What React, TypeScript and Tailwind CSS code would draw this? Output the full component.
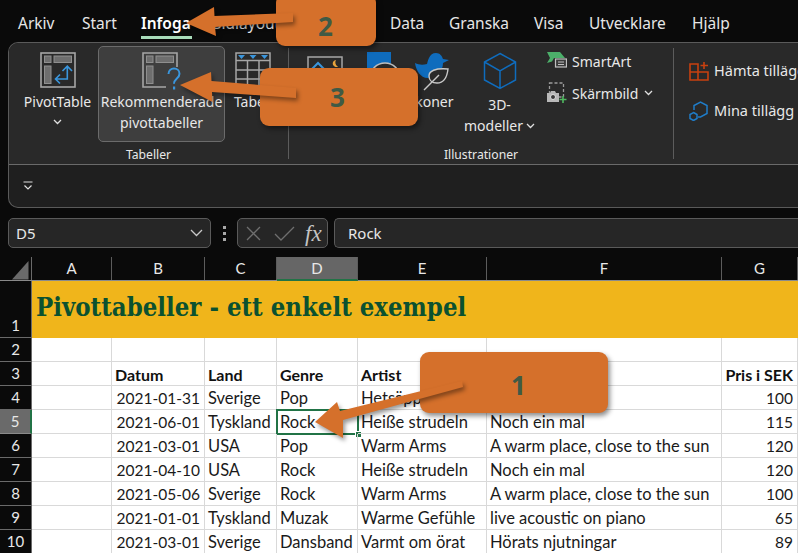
import type { ReactNode } from "react"

const ui = "font-['Noto_Sans',sans-serif]"
const sheet = "font-['Lato',sans-serif]"

const tabs = [
  { label: "Arkiv", width: "w-[64px]" },
  { label: "Start", width: "w-[59px]" },
  { label: "Infoga", width: "w-[72px]", active: true },
  { label: "Sidlayout", width: "w-[87px]" },
  { label: "Formler", width: "w-[90px]" },
  { label: "Data", width: "w-[59px]" },
  { label: "Granska", width: "w-[85px]" },
  { label: "Visa", width: "w-[55px]" },
  { label: "Utvecklare", width: "w-[103px]" },
  { label: "Hjälp", width: "w-[60px]" },
]

const columns = [
  { label: "A", width: "w-[80px]" },
  { label: "B", width: "w-[93px]" },
  { label: "C", width: "w-[72px]" },
  { label: "D", width: "w-[81px]", active: true },
  { label: "E", width: "w-[129px]" },
  { label: "F", width: "w-[235px]" },
  { label: "G", width: "w-[76px]" },
]

const rows = [
  { n: 3, bold: true, cells: ["", "Datum", "Land", "Genre", "Artist", "", "Pris i SEK"] },
  { n: 4, cells: ["", "2021-01-31", "Sverige", "Pop", "Hetsäpp", "", "100"] },
  { n: 5, cells: ["", "2021-06-01", "Tyskland", "Rock", "Heiße strudeln", "Noch ein mal", "115"] },
  { n: 6, cells: ["", "2021-03-01", "USA", "Pop", "Warm Arms", "A warm place, close to the sun", "120"] },
  { n: 7, cells: ["", "2021-04-10", "USA", "Rock", "Heiße strudeln", "Noch ein mal", "120"] },
  { n: 8, cells: ["", "2021-05-06", "Sverige", "Rock", "Warm Arms", "A warm place, close to the sun", "100"] },
  { n: 9, cells: ["", "2021-01-01", "Tyskland", "Muzak", "Warme Gefühle", "live acoustic on piano", "65"] },
  { n: 10, cells: ["", "2021-03-01", "Sverige", "Dansband", "Varmt om örat", "Hörats njutningar", "89"] },
]

function Chevron({ className = "" }: { className?: string }) {
  return (
    <svg width="9" height="6" viewBox="0 0 9 6" className={className}>
      <path d="M1 1l3.500 3.500L8 1" fill="none" stroke="#e0e0e0" strokeWidth="1.3" />
    </svg>
  )
}

function PivotBlocks() {
  return (
    <g fill="#6e6e6e" stroke="#8f8f8f" strokeWidth="1">
      <rect x="4.500" y="4" width="6.500" height="6.500" />
      <rect x="14" y="4" width="17.500" height="6.500" />
      <rect x="4.500" y="14" width="6.500" height="17.500" />
    </g>
  )
}

function PivotIcon() {
  return (
    <svg width="36" height="36" viewBox="0 0 36 36">
      <rect x="1" y="1" width="34" height="34" fill="none" stroke="#a6a6a6" strokeWidth="1.600" />
      <PivotBlocks />
      <path
        d="M27.300 15v12H16M22.500 19l4.800-4.800L32 19M20 22.500L15.500 27l4.500 4.500"
        fill="none"
        stroke="#3a96dd"
        strokeWidth="1.600"
      />
    </svg>
  )
}

function RecommendIcon() {
  return (
    <svg width="40" height="39" viewBox="0 0 40 39" className="overflow-visible">
      <path d="M24 35H1V1h34v14" fill="none" stroke="#a6a6a6" strokeWidth="1.600" />
      <PivotBlocks />
      <path
        d="M26.500 22c0-3.500 2.500-5.500 5.500-5.500s5.500 2 5.500 5.200c0 4.800-5.500 4.800-5.500 10"
        fill="none"
        stroke="#3a96dd"
        strokeWidth="2"
      />
      <rect x="31" y="34.500" width="2.200" height="3" fill="#3a96dd" />
    </svg>
  )
}

function TableIcon() {
  return (
    <svg width="36" height="36" viewBox="0 0 36 36">
      <path
        d="M1 1h34v34H1zM1 8.500h34M1 18h34M1 27h34M12.500 8.500V35M24 8.500V35"
        fill="none"
        stroke="#a6a6a6"
        strokeWidth="1.500"
      />
      <path d="M3 3h7l-3.500 4zM14.500 3h7L18 7zM26 3h7l-3.500 4z" fill="#3a96dd" />
    </svg>
  )
}

function PictureIcon() {
  return (
    <svg width="36" height="36" viewBox="0 0 36 36">
      <rect x="1" y="5" width="34" height="30" fill="none" stroke="#a6a6a6" strokeWidth="1.500" />
      <path d="M5 17l6-6 6 6" fill="none" stroke="#3a96dd" strokeWidth="2" />
      <path d="M29 8a3.500 3.500 0 1 0 2 6.500a4.500 4.500 0 0 1-2-6.500z" fill="#e8a33d" />
    </svg>
  )
}

function ShapesIcon() {
  return (
    <svg width="36" height="36" viewBox="0 0 36 36">
      <rect x="6" y="0" width="24" height="24" fill="#0f6cbd" />
      <circle cx="24" cy="26" r="15" fill="#292929" stroke="#bdbdbd" strokeWidth="1.500" />
    </svg>
  )
}

function IconsIcon() {
  return (
    <svg width="36" height="39" viewBox="0 0 36 39">
      <path
        d="M1 11c4 2 8 2 12 1c1-3 2-11 9-11c4 0 6 3 7 6l6 1l-6 3c0 8-6 15-15 15C6 26 2 18 1 11z"
        fill="#0f6cbd"
      />
      <path
        d="M34 17c-1 9-5 14-11 14c-5 0-8-3-8-7c0-5 6-8 19-7z"
        fill="#292929"
        stroke="#c8c8c8"
        strokeWidth="1.400"
      />
      <path d="M10 38l15-15" fill="none" stroke="#c8c8c8" strokeWidth="1.400" />
    </svg>
  )
}

function CubeIcon() {
  return (
    <svg width="34" height="38" viewBox="0 0 34 38" className="mb-[4px]">
      <path
        d="M17 1.500L32.500 10v18L17 36.500 1.500 28V10zM1.500 10L17 19l15.500-9M17 19v17.500"
        fill="none"
        stroke="#0f6cbd"
        strokeWidth="1.500"
      />
    </svg>
  )
}

function SmartArtIcon() {
  return (
    <svg width="20" height="20" viewBox="0 0 20 20">
      <path d="M0 1h13l5 6H7l-2 3.500L0 12l3-5z" fill="#4caf6a" />
      <rect x="8.500" y="8" width="11" height="8" fill="#3a3a3a" stroke="#c0c0c0" strokeWidth="1.200" />
      <path d="M11 11h6M11 13.500h6" stroke="#c0c0c0" strokeWidth="1" />
    </svg>
  )
}

function ScreenshotIcon() {
  return (
    <svg width="20" height="22" viewBox="0 0 20 22">
      <rect x="2.500" y="1" width="14" height="14" fill="none" stroke="#9a9a9a" strokeWidth="1.300" strokeDasharray="3 2" />
      <path d="M0 11h3l1-2h4l1 2h3v9H0z" fill="#b8b8b8" />
      <circle cx="6" cy="15" r="2.500" fill="#3a3a3a" stroke="#e0e0e0" strokeWidth="1" />
      <path d="M16 14v7M12.500 17.500h7" stroke="#4fb860" strokeWidth="1.600" />
    </svg>
  )
}

function AddinsIcon() {
  return (
    <svg width="20" height="20" viewBox="0 0 20 20">
      <path d="M1 3h8v16H1zM1 11h18v8H9" fill="none" stroke="#c8400f" strokeWidth="1.600" />
      <path d="M15 1v7M11.500 4.500h7.500" stroke="#c8400f" strokeWidth="1.600" />
    </svg>
  )
}

function MyAddinsIcon() {
  return (
    <svg width="20" height="20" viewBox="0 0 20 20">
      <path d="M5 9V4.500L11.500 1 18 4.500v8L11.500 16H9" fill="none" stroke="#1f7cc8" strokeWidth="1.500" />
      <path d="M4.500 11.500L8 13.500v4L4.500 19.500 1 17.500v-4z" fill="none" stroke="#1f7cc8" strokeWidth="1.500" />
    </svg>
  )
}

function BigButton({
  icon,
  lines,
  width,
  selected,
}: {
  icon: ReactNode
  lines: ReactNode[]
  width: string
  selected?: boolean
}) {
  return (
    <div
      className={`flex h-[96px] shrink-0 flex-col items-center rounded-[5px] border pt-[5px] text-[14px] leading-[21px] ${width} ${
        selected ? "border-[#6b6b6b] bg-[#3e3e3e]" : "border-transparent"
      }`}
    >
      <div className="flex min-h-[39px] items-start">{icon}</div>
      {lines.map((line, i) => (
        <div key={i} className="flex h-[21px] items-center whitespace-nowrap">
          {line}
        </div>
      ))}
    </div>
  )
}

function Group({
  label,
  width,
  padding,
  children,
}: {
  label?: string
  width: string
  padding: string
  children: ReactNode
}) {
  return (
    <div className={`relative flex h-full shrink-0 flex-col ${width}`}>
      <div className={`flex flex-1 items-start ${padding}`}>{children}</div>
      {label && <div className="h-[24px] pt-[3px] text-center text-[12.200px] leading-[20px]">{label}</div>}
    </div>
  )
}

function Separator() {
  return <div className="mt-[5px] h-[111px] w-px shrink-0 bg-[#5c5c5c]" />
}

function Ribbon() {
  return (
    <div
      className={`${ui} ml-2 h-[166px] overflow-hidden rounded-l-[10px] border border-r-0 border-[#5a5a5a] bg-[#1f1f1f] text-[#e8e8e8]`}
    >
      <div className="flex h-[122px] border-b border-[#6a6a6a] bg-[#292929]">
        <Group label="Tabeller" width="w-[279px]" padding="pl-[8px] pt-[3px]">
          <BigButton
            icon={<PivotIcon />}
            width="w-[81px]"
            lines={["PivotTable", <Chevron key="c" className="-mt-[2px]" />]}
          />
          <BigButton icon={<RecommendIcon />} width="w-[127px]" selected lines={["Rekommenderade", "pivottabeller"]} />
          <BigButton icon={<TableIcon />} width="w-[56px]" lines={["Tabell"]} />
        </Group>
        <Separator />
        <Group label="Illustrationer" width="w-[384px]" padding="pl-[10px] pt-[3px]">
          <BigButton icon={<PictureIcon />} width="w-[52px]" lines={["Bilder"]} />
          <BigButton icon={<ShapesIcon />} width="w-[56px]" lines={["Former"]} />
          <BigButton icon={<IconsIcon />} width="w-[50px]" lines={["Ikoner"]} />
          <BigButton
            icon={<CubeIcon />}
            width="w-[85px]"
            lines={[
              "3D-",
              <span key="m" className="flex items-center gap-[3px]">
                modeller <Chevron />
              </span>,
            ]}
          />
          <div className="ml-[5px] -mt-[1px] flex flex-col text-[14px]">
            <div className="flex h-[32px] items-center gap-[5px]">
              <SmartArtIcon />
              SmartArt
            </div>
            <div className="flex h-[32px] items-center gap-[5px]">
              <ScreenshotIcon />
              Skärmbild <Chevron className="ml-[1px]" />
            </div>
          </div>
        </Group>
        <Separator />
        <Group width="w-[140px]" padding="pl-[15px] pt-[8px]">
          <div className="flex flex-col text-[14.500px]">
            <div className="flex h-[40px] items-center gap-[5px] whitespace-nowrap">
              <AddinsIcon />
              Hämta tillägg
            </div>
            <div className="flex h-[40px] items-center gap-[5px] whitespace-nowrap">
              <MyAddinsIcon />
              Mina tillägg
            </div>
          </div>
        </Group>
      </div>
      <div className="flex h-[41px] items-center pl-[14px]">
        <svg width="10" height="10" viewBox="0 0 10 10">
          <path d="M0.500 1h9M1.500 4.500L5 8l3.500-3.500" fill="none" stroke="#e0e0e0" strokeWidth="1.200" />
        </svg>
      </div>
    </div>
  )
}

function FormulaBar() {
  return (
    <div className={`${ui} mt-[10px] flex h-[30px] items-stretch pl-2 text-[15px] text-[#e8e8e8]`}>
      <div className="flex w-[203px] items-center justify-between rounded-[5px] border border-[#5a5a5a] bg-[#262626] px-[7px]">
        D5
        <svg width="13" height="8" viewBox="0 0 13 8">
          <path d="M1 1l5.500 5.500L12 1" fill="none" stroke="#c8c8c8" strokeWidth="1.300" />
        </svg>
      </div>
      <div className="flex w-[26px] flex-col items-center justify-center gap-[3px]">
        <span className="h-[3px] w-[3px] bg-[#a8a8a8]" />
        <span className="h-[3px] w-[3px] bg-[#a8a8a8]" />
        <span className="h-[3px] w-[3px] bg-[#a8a8a8]" />
      </div>
      <div className="flex w-[91px] items-center rounded-[5px] border border-[#5a5a5a] bg-[#262626] pl-[8px]">
        <svg width="15" height="15" viewBox="0 0 15 15">
          <path d="M1 1l13 13M14 1L1 14" stroke="#6f6f6f" strokeWidth="1.300" />
        </svg>
        <svg width="21" height="15" viewBox="0 0 21 15" className="ml-[13px]">
          <path d="M1 8l6 6L20 1" fill="none" stroke="#6f6f6f" strokeWidth="1.300" />
        </svg>
        <span className="ml-[10px] font-['Liberation_Serif',serif] text-[23px] italic leading-none text-[#c4c4c4]">
          fx
        </span>
      </div>
      <div className="ml-[6px] flex flex-1 items-center rounded-l-[5px] border border-r-0 border-[#5a5a5a] bg-[#262626] pl-[13px]">
        Rock
      </div>
    </div>
  )
}

function RowHeader({ n, active, className = "" }: { n: number; active?: boolean; className?: string }) {
  return (
    <div
      className={`flex w-[32px] shrink-0 justify-center border-b border-r text-[15px] text-[#e8e8e8] ${
        active ? "border-r-[#217346] border-r-2 border-b-[#8a8a8a] bg-[#6a6a6a]" : "border-[#6a6a6a] bg-[#0a0a0a]"
      } ${className}`}
    >
      {n}
    </div>
  )
}

function Sheet() {
  return (
    <div className={`${sheet} mt-[9px] text-[16.500px] leading-[23px] text-[#1a1a1a]`}>
      {/* column letters */}
      <div className="flex h-[24px] border-b border-[#8a8a8a] text-[15px] text-[#e8e8e8]">
        <div className="relative w-[32px] shrink-0 border-r border-[#6a6a6a]">
          <svg width="17" height="19" viewBox="0 0 17 19" className="ml-[12px] mt-[4px]">
            <path d="M16.500 0v18.500H0z" fill="#6a6a6a" />
          </svg>
        </div>
        {columns.map((c) => (
          <div
            key={c.label}
            className={`flex shrink-0 items-center justify-center border-r border-[#5c5c5c] ${c.width} ${
              c.active ? "-mb-px border-b-2 border-b-[#217346] bg-[#666666]" : ""
            }`}
          >
            {c.label}
          </div>
        ))}
      </div>

      {/* title row */}
      <div className="flex h-[57px]">
        <RowHeader n={1} className="items-end" />
        <div className="flex flex-1 items-center bg-[#f0b51b] pb-[4px] pl-[4px] font-['DejaVu_Serif_Condensed','DejaVu_Serif',serif] text-[25.500px] font-bold text-[#0b5130]">
          Pivottabeller - ett enkelt exempel
        </div>
      </div>

      {/* empty row */}
      <div className="flex h-[24px] bg-white">
        <RowHeader n={2} />
        {columns.map((c) => (
          <div key={c.label} className={`shrink-0 border-b border-r border-[#d9d9d9] ${c.width}`} />
        ))}
      </div>

      {rows.map((r) => (
        <div key={r.n} className="flex h-[24px] bg-white">
          <RowHeader n={r.n} active={r.n === 5} />
          {r.cells.map((text, i) => {
            const c = columns[i]
            const numeric = !r.bold && (i === 1 || i === 6)
            const selected = r.n === 5 && i === 3
            return (
              <div
                key={c.label}
                className={`relative shrink-0 whitespace-nowrap border-b border-r border-[#d9d9d9] pt-px ${c.width} ${
                  i === 6 || numeric ? "pr-[4px] text-right" : "pl-[3px]"
                } ${numeric ? "text-[15.500px]" : ""} ${r.bold ? "text-[16px] font-bold text-[#111111]" : ""}`}
              >
                {text}
                {selected && (
                  <div className="absolute -left-px -top-px bottom-[-2px] right-[-2px] border-2 border-[#217346]">
                    <span className="absolute -bottom-[5px] -right-[5px] h-[7px] w-[7px] border border-white bg-[#217346]" />
                  </div>
                )}
              </div>
            )
          })}
        </div>
      ))}
    </div>
  )
}

function Callout({ box, n, numberClass }: { box: string; n: string; numberClass: string }) {
  return (
    <div
      className={`absolute flex items-center rounded-[9px] bg-[#d5702b] shadow-[2px_3px_5px_rgba(0,0,0,0.45)] ${box}`}
    >
      <span
        className={`absolute font-['Open_Sans',sans-serif] text-[26px] font-bold leading-none text-[#3f5a45] ${numberClass}`}
      >
        {n}
      </span>
    </div>
  )
}

export default function App() {
  return (
    <div className="relative h-[553px] w-[798px] overflow-hidden bg-[#0a0a0a]">
      {/* top tabs */}
      <div className={`${ui} flex h-[42px] pl-[18px] text-[15.500px] text-[#e6e6e6]`}>
        {tabs.map((t) => (
          <div key={t.label} className={`relative shrink-0 pt-[12px] ${t.width} ${t.active ? "font-semibold text-white" : ""}`}>
            {t.label}
            {t.active && <span className="absolute left-0 top-[36px] h-[3px] w-[51px] bg-[#a9dcba]" />}
          </div>
        ))}
      </div>

      <Ribbon />
      <FormulaBar />
      <Sheet />

      {/* annotations on top of the screenshot */}
      <Callout box="left-[276px] top-[-6px] h-[52px] w-[100px]" n="2" numberClass="left-[42px] top-[19px]" />
      <Callout box="left-[260px] top-[68px] h-[58px] w-[158px]" n="3" numberClass="left-[70px] top-[16px]" />
      <Callout box="left-[420px] top-[352px] h-[61px] w-[188px]" n="1" numberClass="left-[91px] top-[20px]" />
      <svg
        width="798"
        height="553"
        viewBox="0 0 798 553"
        className="pointer-events-none absolute left-0 top-0 drop-shadow-[2px_3px_2px_rgba(0,0,0,0.4)]"
      >
        <path d="M186 23L214 7l.5 9L293 13v9l-78 5 1 9z" fill="#d5702b" />
        <path d="M180 85l31-13 .5 9 84.500 7v10l-84-6 .5 10z" fill="#d5702b" />
        <path d="M315 422L337 402l3 9L462 381l1 6L343 420v18z" fill="#d5702b" />
      </svg>
    </div>
  )
}
